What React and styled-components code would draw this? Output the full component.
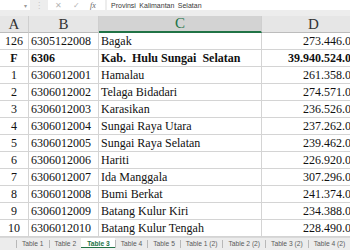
import styled, { createGlobalStyle, css } from "styled-components"

const GlobalStyle = createGlobalStyle`
    html, body {
        margin: 0;
        padding: 0;
        overflow: hidden;
        background: #ededed;
    }
`

const rows = [
    ["126", "6305122008", "Bagak", "273.446.000"],
    ["F", "6306", "Kab.  Hulu Sungai  Selatan", "39.940.524.000", true],
    ["1", "6306012001", "Hamalau", "261.358.000"],
    ["2", "6306012002", "Telaga Bidadari", "274.571.000"],
    ["3", "6306012003", "Karasikan", "236.526.000"],
    ["4", "6306012004", "Sungai Raya Utara", "237.262.000"],
    ["5", "6306012005", "Sungai Raya Selatan", "239.462.000"],
    ["6", "6306012006", "Hariti", "226.920.000"],
    ["7", "6306012007", "Ida Manggala", "307.296.000"],
    ["8", "6306012008", "Bumi Berkat", "241.374.000"],
    ["9", "6306012009", "Batang Kulur Kiri", "234.388.000"],
    ["10", "6306012010", "Batang Kulur Tengah", "228.490.000"],
]

const tabs = ["Table 1", "Table 2", "Table 3", "Table 4", "Table 5", "Table 1 (2)", "Table 2 (2)", "Table 3 (2)", "Table 4 (2)"]

const Page = styled.div`
    width: 350px;
    height: 250px;
    overflow: hidden;
    display: flex;
    flex-direction: column;
    background: #ededed;
`

const FormulaBar = styled.div`
    display: flex;
    height: 10px;
    margin-bottom: 6px;
    flex-shrink: 0;
`

const Box = styled.div`
    background: #fff;
    height: 10px;
    display: flex;
    align-items: center;
    font-family: "Liberation Sans", Arial, sans-serif;
    color: #9a9a9a;
    font-size: 8px;
    box-sizing: border-box;
`

const NameBox = styled(Box)`
    width: 30px;
    justify-content: flex-end;
    padding-right: 3px;
    font-size: 6px;
`

const Grip = styled.div`
    width: 18px;
    display: flex;
    justify-content: center;
    align-items: center;
    color: #c4c4c4;
    font-size: 8px;
    font-family: "DejaVu Sans", sans-serif;
`

const Actions = styled(Box)`
    width: 57px;
    justify-content: space-around;
    padding: 0 4px 0 2px;
    color: #b5b5b5;
    & i {
        font-family: "Liberation Serif", serif;
        color: #666;
        font-size: 8px;
    }
`

const FormulaInput = styled(Box)`
    flex: 1;
    margin-left: 2px;
    padding-left: 4px;
    color: #3a3a3a;
    font-size: 7px;
    word-spacing: 1.5px;
    white-space: pre;
`

const Grid = styled.div`
    display: grid;
    grid-template-columns: 29px 70px 163px 104px;
    grid-auto-rows: 17px;
    width: 366px;
    background: #fff;
    flex-shrink: 0;
`

const HeadCell = styled.div`
    display: flex;
    align-items: center;
    justify-content: center;
    background: #e6e6e6;
    border-right: 1px solid #cfcfcf;
    border-bottom: 1px solid #bcbcbc;
    font-family: "Liberation Serif", "Times New Roman", serif;
    font-size: 15px;
    color: #333;
    box-sizing: border-box;

    ${props => props.selected && css`
        background: #d3d3d3;
        color: #217346;
        border-bottom: 2px solid #217346;
    `}
`

const Cell = styled.div`
    display: flex;
    align-items: center;
    box-sizing: border-box;
    border-right: 1px solid #d4d4d4;
    border-bottom: 1px solid #d4d4d4;
    padding: 1px 2px 0;
    font-family: "Liberation Serif", "Times New Roman", serif;
    font-size: 12px;
    color: #111;
    white-space: pre;
    overflow: hidden;
    font-weight: ${props => (props.bold ? 700 : 400)};
    justify-content: ${props => props.align || "flex-start"};
`

const TabBar = styled.div`
    flex: 1;
    display: flex;
    align-items: stretch;
    padding-left: 16px;
    background: #ececec;
    border-top: 1px solid #d8d8d8;
`

const Tab = styled.div`
    display: flex;
    align-items: center;
    padding: 0 5px 1px 6px;
    position: relative;
    font-family: "Liberation Sans", Arial, sans-serif;
    font-size: 6.7px;
    color: #5a5a5a;
    white-space: nowrap;

    &::before {
        content: "";
        position: absolute;
        left: 0;
        top: 2px;
        height: 8px;
        border-left: 1px solid #b8b8b8;
    }

    ${props => props.active && css`
        background: #fff;
        color: #217346;
        font-weight: 700;
        box-shadow: inset 0 -2px 0 #f4f4f4, inset 0 -3px 0 #217346;
        &::before { display: none; }
    `}
`

function App() {
    return (
        <Page>
            <GlobalStyle />
            <FormulaBar>
                <NameBox>▾</NameBox>
                <Grip>⋮</Grip>
                <Actions>
                    <span>✕</span>
                    <span>✓</span>
                    <i>fx</i>
                </Actions>
                <FormulaInput>Provinsi Kalimantan Selatan</FormulaInput>
            </FormulaBar>

            <Grid>
                <HeadCell>A</HeadCell>
                <HeadCell>B</HeadCell>
                <HeadCell selected>C</HeadCell>
                <HeadCell>D</HeadCell>
                {rows.map(([a, b, c, d, bold]) => (
                    <>
                        <Cell key={a + "a"} bold={bold} align="center">{a}</Cell>
                        <Cell key={a + "b"} bold={bold}>{b}</Cell>
                        <Cell key={a + "c"} bold={bold}>{c}</Cell>
                        <Cell key={a + "d"} bold={bold} align="flex-end">{d}</Cell>
                    </>
                ))}
            </Grid>

            <TabBar>
                {tabs.map(tab => (
                    <Tab key={tab} active={tab === "Table 3"}>{tab}</Tab>
                ))}
            </TabBar>
        </Page>
    )
}

export default App
